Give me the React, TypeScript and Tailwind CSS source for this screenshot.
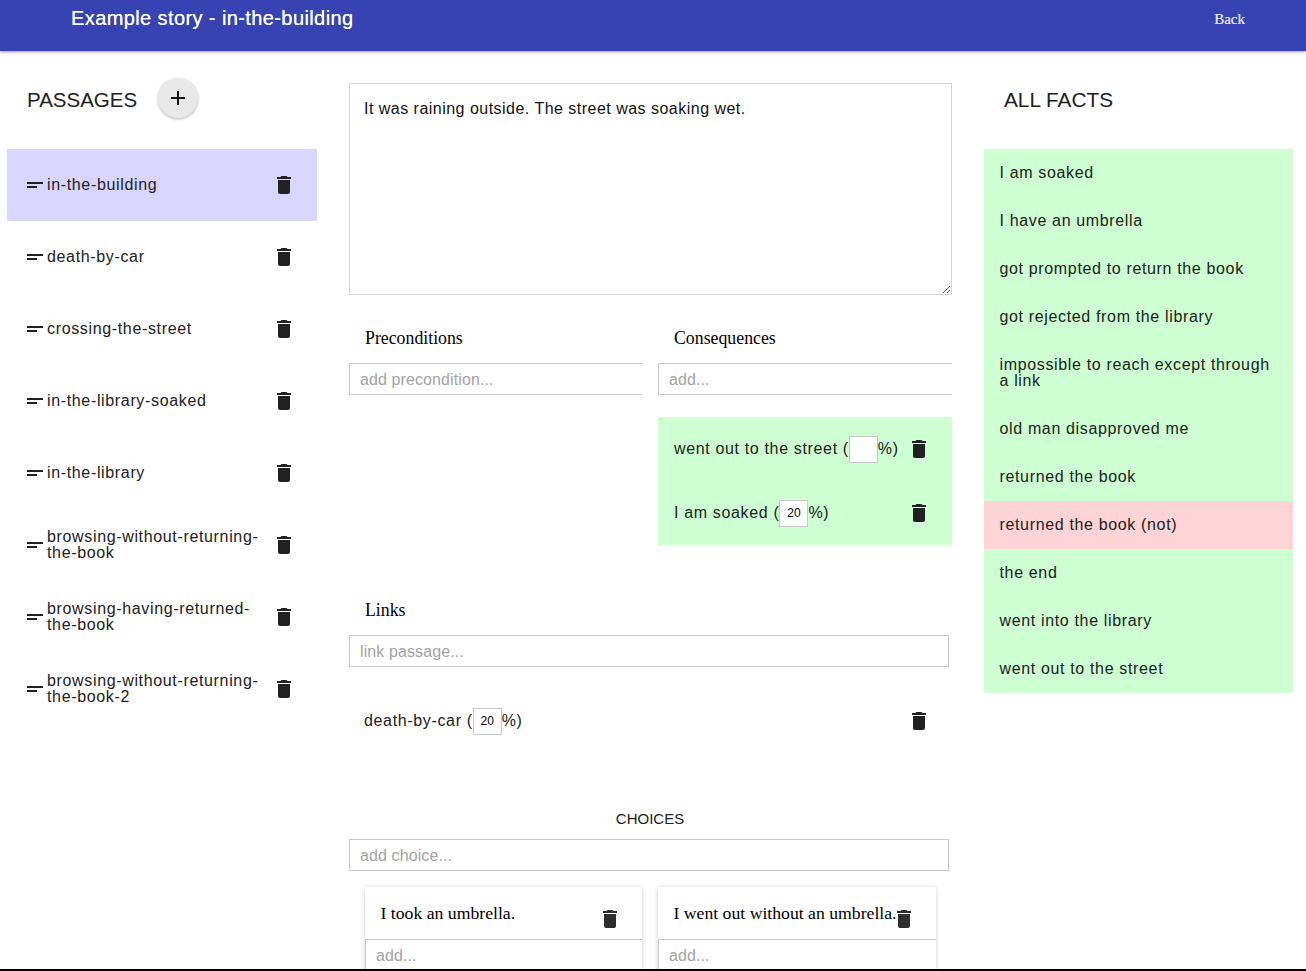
const passages = [
  'in-the-building',
  'death-by-car',
  'crossing-the-street',
  'in-the-library-soaked',
  'in-the-library',
  'browsing-without-returning-the-book',
  'browsing-having-returned-the-book',
  'browsing-without-returning-the-book-2',
];

const facts = [
  { text: 'I am soaked' },
  { text: 'I have an umbrella' },
  { text: 'got prompted to return the book' },
  { text: 'got rejected from the library' },
  { text: 'impossible to reach except through a link', tall: true },
  { text: 'old man disapproved me' },
  { text: 'returned the book' },
  { text: 'returned the book (not)', negated: true },
  { text: 'the end' },
  { text: 'went into the library' },
  { text: 'went out to the street' },
];

function TrashIcon({ className = 'text-[#212121]' }: { className?: string }) {
  return (
    <svg viewBox="0 0 24 24" className={`h-6 w-6 shrink-0 fill-current ${className}`}>
      <path d="M19,4H15.5L14.5,3H9.5L8.5,4H5V6H19M6,19A2,2 0 0,0 8,21H16A2,2 0 0,0 18,19V7H6V19Z" />
    </svg>
  );
}

function DragIcon() {
  return (
    <svg viewBox="0 0 16 6" className="mr-1 h-[6px] w-4 shrink-0 fill-[#212121]">
      <rect x="0" y="0" width="16" height="2" />
      <rect x="0" y="4" width="10" height="2" />
    </svg>
  );
}

function PercentInput({ value }: { value: string }) {
  return (
    <input
      readOnly
      value={value}
      className="h-[27px] w-[29px] border border-[#c8c8c8] bg-white text-center text-xs tracking-normal text-black outline-none"
    />
  );
}

function TextField({ placeholder, noRight, className = '' }: { placeholder: string; noRight?: boolean; className?: string }) {
  return (
    <input
      readOnly
      placeholder={placeholder}
      className={`h-8 border border-[#c8c8c8] bg-white pt-[2px] pr-[11px] pl-[10px] text-base tracking-[0.1px] outline-none placeholder:text-[#a3a3a3] ${noRight ? 'border-r-0' : ''} ${className}`}
    />
  );
}

function ChoiceCard({ title }: { title: string }) {
  return (
    <div className="flex h-[100px] flex-col bg-white shadow-[0_1px_5px_rgba(0,0,0,0.2)]">
      <div className="relative flex h-[52px] shrink-0 items-center pl-[15.5px] font-['Liberation_Serif',serif] text-[17.7px] tracking-normal text-black">
        <span className="whitespace-nowrap">{title}</span>
        <div className="absolute top-5 right-5">
          <TrashIcon className="text-[#2e2e2e]" />
        </div>
      </div>
      <TextField placeholder="add..." noRight className="w-full" />
    </div>
  );
}

export default function App() {
  return (
    <div className="flex h-[971px] flex-col overflow-hidden bg-white font-['Liberation_Sans',sans-serif] text-base leading-4 tracking-[0.65px] text-[#212121]">
      <header className="z-10 flex h-[51px] shrink-0 justify-between bg-[#3843b3] pl-[71px] pr-[61px] shadow-[0_1px_3px_rgba(0,0,0,0.4)]">
        <h1 className="mt-[6px] text-[20px] leading-6 font-normal tracking-[0.4px] text-white [text-shadow:0_0_0.5px_white]">
          Example story - in-the-building
        </h1>
        <a className="mt-[11px] font-['Liberation_Serif',serif] text-[15px] tracking-normal text-[#dfe1f5] [text-shadow:0_0_0.5px_#dfe1f5]">Back</a>
      </header>

      <main className="flex min-h-0 flex-1 gap-8 overflow-hidden pl-[7px]">
        <section className="w-[310px] shrink-0">
          <div className="flex h-[98px] items-start pl-5 pt-[27px]">
            <h2 className="mt-[10px] text-[20.5px] leading-6 font-normal tracking-normal">PASSAGES</h2>
            <button className="ml-[21px] flex h-10 w-10 items-center justify-center rounded-full bg-[#e8e8e8] shadow-[0_1px_3px_rgba(0,0,0,0.3)]">
              <svg viewBox="0 0 24 24" className="h-6 w-6 fill-[#111]">
                <path d="M19,13H13V19H11V13H5V11H11V5H13V11H19V13Z" />
              </svg>
            </button>
          </div>
          <ul>
            {passages.map((name, i) => (
              <li
                key={name}
                className={`flex h-[72px] items-center pl-5 pr-[21px] ${i === 0 ? 'bg-[#d8d6ff]' : ''}`}
              >
                <DragIcon />
                <span className="flex-1 pr-2">{name}</span>
                <TrashIcon />
              </li>
            ))}
          </ul>
        </section>

        <section className="w-[603px] shrink-0 pt-8">
          <textarea
            readOnly
            value="It was raining outside. The street was soaking wet."
            className="block h-[212px] w-full resize-y border border-[#d4d4d4] px-[14px] pt-[17px] text-base leading-4 tracking-[0.48px] text-[#111] outline-none"
          />

          <div className="mt-[27px] grid grid-cols-[293px_294px] gap-x-4">
            <div>
              <h3 className="pl-4 font-['Liberation_Serif',serif] text-[17.8px] leading-8 tracking-normal text-black">Preconditions</h3>
              <TextField placeholder="add precondition..." noRight className="mt-[9px] w-full" />
            </div>
            <div>
              <h3 className="pl-4 font-['Liberation_Serif',serif] text-[17.8px] leading-8 tracking-normal text-black">Consequences</h3>
              <TextField placeholder="add..." noRight className="mt-[9px] w-full" />
              <div className="mt-[22px] bg-[#ceffd2]">
                <div className="flex h-16 items-center pl-4 pr-[21px]">
                  <span className="flex flex-1 items-center whitespace-nowrap">went out to the street (<PercentInput value="" />%)</span>
                  <TrashIcon />
                </div>
                <div className="flex h-16 items-center pl-4 pr-[21px]">
                  <span className="flex flex-1 items-center whitespace-nowrap">I am soaked (<PercentInput value="20" />%)</span>
                  <TrashIcon />
                </div>
              </div>
            </div>
          </div>

          <h3 className="mt-[49px] pl-4 font-['Liberation_Serif',serif] text-[17.8px] leading-8 tracking-normal text-black">Links</h3>
          <TextField placeholder="link passage..." className="mt-[9px] w-[600px]" />
          <div className="mt-[22px] flex h-16 w-[600px] items-center pl-[15px] pr-[18px]">
            <span className="flex flex-1 items-center whitespace-nowrap">death-by-car (<PercentInput value="20" />%)</span>
            <TrashIcon />
          </div>

          <h3 className="mt-[54px] w-[602px] text-center text-[15px] leading-6 font-normal tracking-normal">CHOICES</h3>
          <TextField placeholder="add choice..." className="mt-2 w-[600px]" />
          <div className="mt-4 grid grid-cols-[277px_278px] gap-x-4 pl-4">
            <ChoiceCard title="I took an umbrella." />
            <ChoiceCard title="I went out without an umbrella." />
          </div>
        </section>

        <section className="w-[309px] shrink-0">
          <h2 className="mt-[37px] h-[61px] pl-5 text-[20.8px] leading-6 font-normal tracking-normal">ALL FACTS</h2>
          <ul>
            {facts.map((fact) => (
              <li
                key={fact.text}
                className={`flex items-center px-[15.5px] ${fact.tall ? 'h-16' : 'h-12'} ${fact.negated ? 'bg-[#ffd4d6]' : 'bg-[#ceffd2]'}`}
              >
                {fact.text}
              </li>
            ))}
          </ul>
        </section>
      </main>
      <div className="h-0.5 shrink-0 bg-black" />
    </div>
  );
}
